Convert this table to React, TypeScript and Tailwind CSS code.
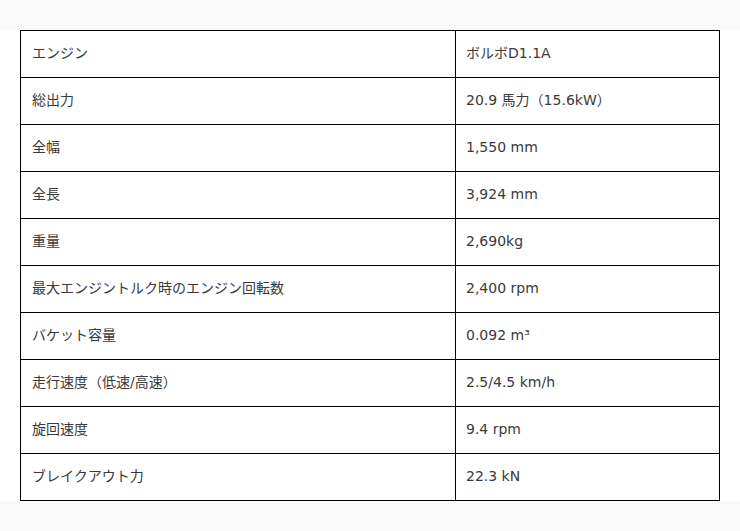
const specs: [string, string][] = [
  ['エンジン', 'ボルボD1.1A'],
  ['総出力', '20.9 馬力（15.6kW）'],
  ['全幅', '1,550 mm'],
  ['全長', '3,924 mm'],
  ['重量', '2,690kg'],
  ['最大エンジントルク時のエンジン回転数', '2,400 rpm'],
  ['バケット容量', '0.092 m³'],
  ['走行速度（低速/高速）', '2.5/4.5 km/h'],
  ['旋回速度', '9.4 rpm'],
  ['ブレイクアウト力', '22.3 kN'],
];

export default function App() {
  return (
    <div
      className="min-h-[531px] bg-[#f9f9f9] pt-[30px] pb-[31px] text-[14px] text-[#3a3a3a]"
      style={{ fontFamily: '"DejaVu Sans", "Noto Sans CJK JP", sans-serif' }}
    >
      <div className="bg-white px-[20px]">
        <table className="w-[700px] border-collapse">
          <tbody>
            {specs.map(([label, value]) => (
              <tr key={label} className="h-[47px]">
                <td className="w-[435px] border border-black px-[11px] pb-[2px] align-middle">{label}</td>
                <td className="border border-black px-[10px] pb-[2px] align-middle">{value}</td>
              </tr>
            ))}
          </tbody>
        </table>
      </div>
    </div>
  );
}
